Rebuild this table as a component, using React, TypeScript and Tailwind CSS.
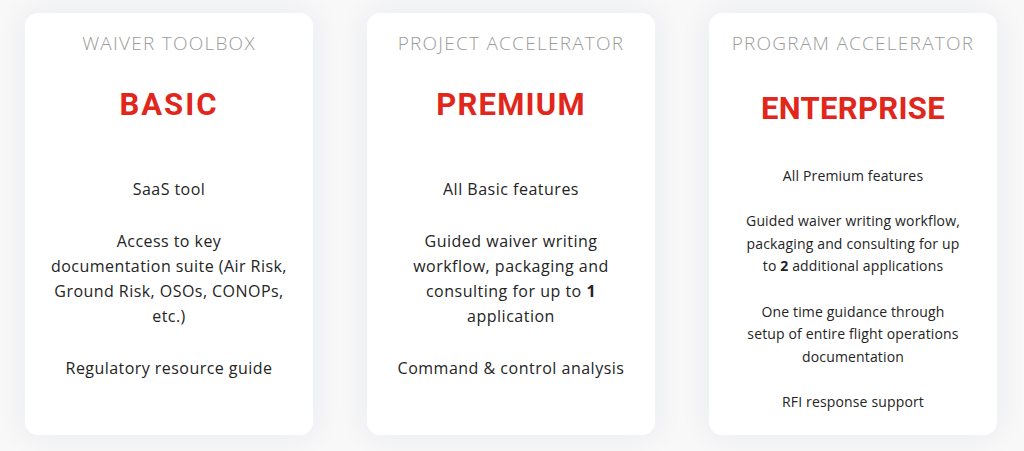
import React from "react";

const body = { fontFamily: '"Open Sans", "Noto Sans", sans-serif' };
const head = { fontFamily: 'Roboto, "Liberation Sans", Arial, sans-serif' };

function Card({
  label,
  title,
  titleMt,
  titleTrack,
  listMt,
  size,
  lh,
  gap,
  track,
  items,
}: {
  label: string;
  title: string;
  titleMt: string;
  titleTrack: string;
  listMt: string;
  size: string;
  lh: string;
  gap: string;
  track: string;
  items: React.ReactNode[];
}) {
  return (
    <div className="w-[288px] h-[422px] bg-white rounded-[13px] shadow-[0_0_32px_rgba(30,40,70,0.07)] flex flex-col items-center pt-[18px]">
      <div
        className="text-[19px] leading-[24px] text-[#9b9b9b] font-light tracking-[1.25px] whitespace-nowrap"
        style={body}
      >
        {label}
      </div>
      <div
        className={`text-[31px] leading-[36px] font-bold text-[#e1261c] ${titleMt} ${titleTrack}`}
        style={head}
      >
        {title}
      </div>
      <div
        className={`flex flex-col items-center text-center text-[#242424] whitespace-nowrap ${listMt} ${size} ${lh} ${gap} ${track}`}
        style={body}
      >
        {items.map((it, i) => (
          <p key={i}>{it}</p>
        ))}
      </div>
    </div>
  );
}

export default function App() {
  return (
    <div className="w-[1024px] h-[451px] bg-[#f8f8f9] flex pl-[25px] pt-[13px] gap-[54px] overflow-hidden">
      <Card
        label="WAIVER TOOLBOX"
        title="BASIC"
        titleMt="mt-[32px]"
        titleTrack="tracking-[2px]"
        listMt="mt-[54px]"
        size="text-[16px]"
        lh="leading-[25px]"
        gap="gap-[27px]"
        track="tracking-[0.45px]"
        items={[
          "SaaS tool",
          <>
            Access to key
            <br />
            documentation suite (Air Risk,
            <br />
            Ground Risk, OSOs, CONOPs,
            <br />
            etc.)
          </>,
          "Regulatory resource guide",
        ]}
      />
      <Card
        label="PROJECT ACCELERATOR"
        title="PREMIUM"
        titleMt="mt-[32px]"
        titleTrack="tracking-[1.2px]"
        listMt="mt-[54px]"
        size="text-[16px]"
        lh="leading-[25px]"
        gap="gap-[27px]"
        track="tracking-[0.5px]"
        items={[
          "All Basic features",
          <>
            Guided waiver writing
            <br />
            workflow, packaging and
            <br />
            consulting for up to <b className="font-bold">1</b>
            <br />
            application
          </>,
          "Command & control analysis",
        ]}
      />
      <Card
        label="PROGRAM ACCELERATOR"
        title="ENTERPRISE"
        titleMt="mt-[36px]"
        titleTrack="tracking-[0.3px]"
        listMt="mt-[38px]"
        size="text-[14px]"
        lh="leading-[22.6px]"
        gap="gap-[22.6px]"
        track="tracking-[0.15px]"
        items={[
          "All Premium features",
          <>
            Guided waiver writing workflow,
            <br />
            packaging and consulting for up
            <br />
            to <b className="font-bold">2</b> additional applications
          </>,
          <>
            One time guidance through
            <br />
            setup of entire flight operations
            <br />
            documentation
          </>,
          "RFI response support",
        ]}
      />
    </div>
  );
}
